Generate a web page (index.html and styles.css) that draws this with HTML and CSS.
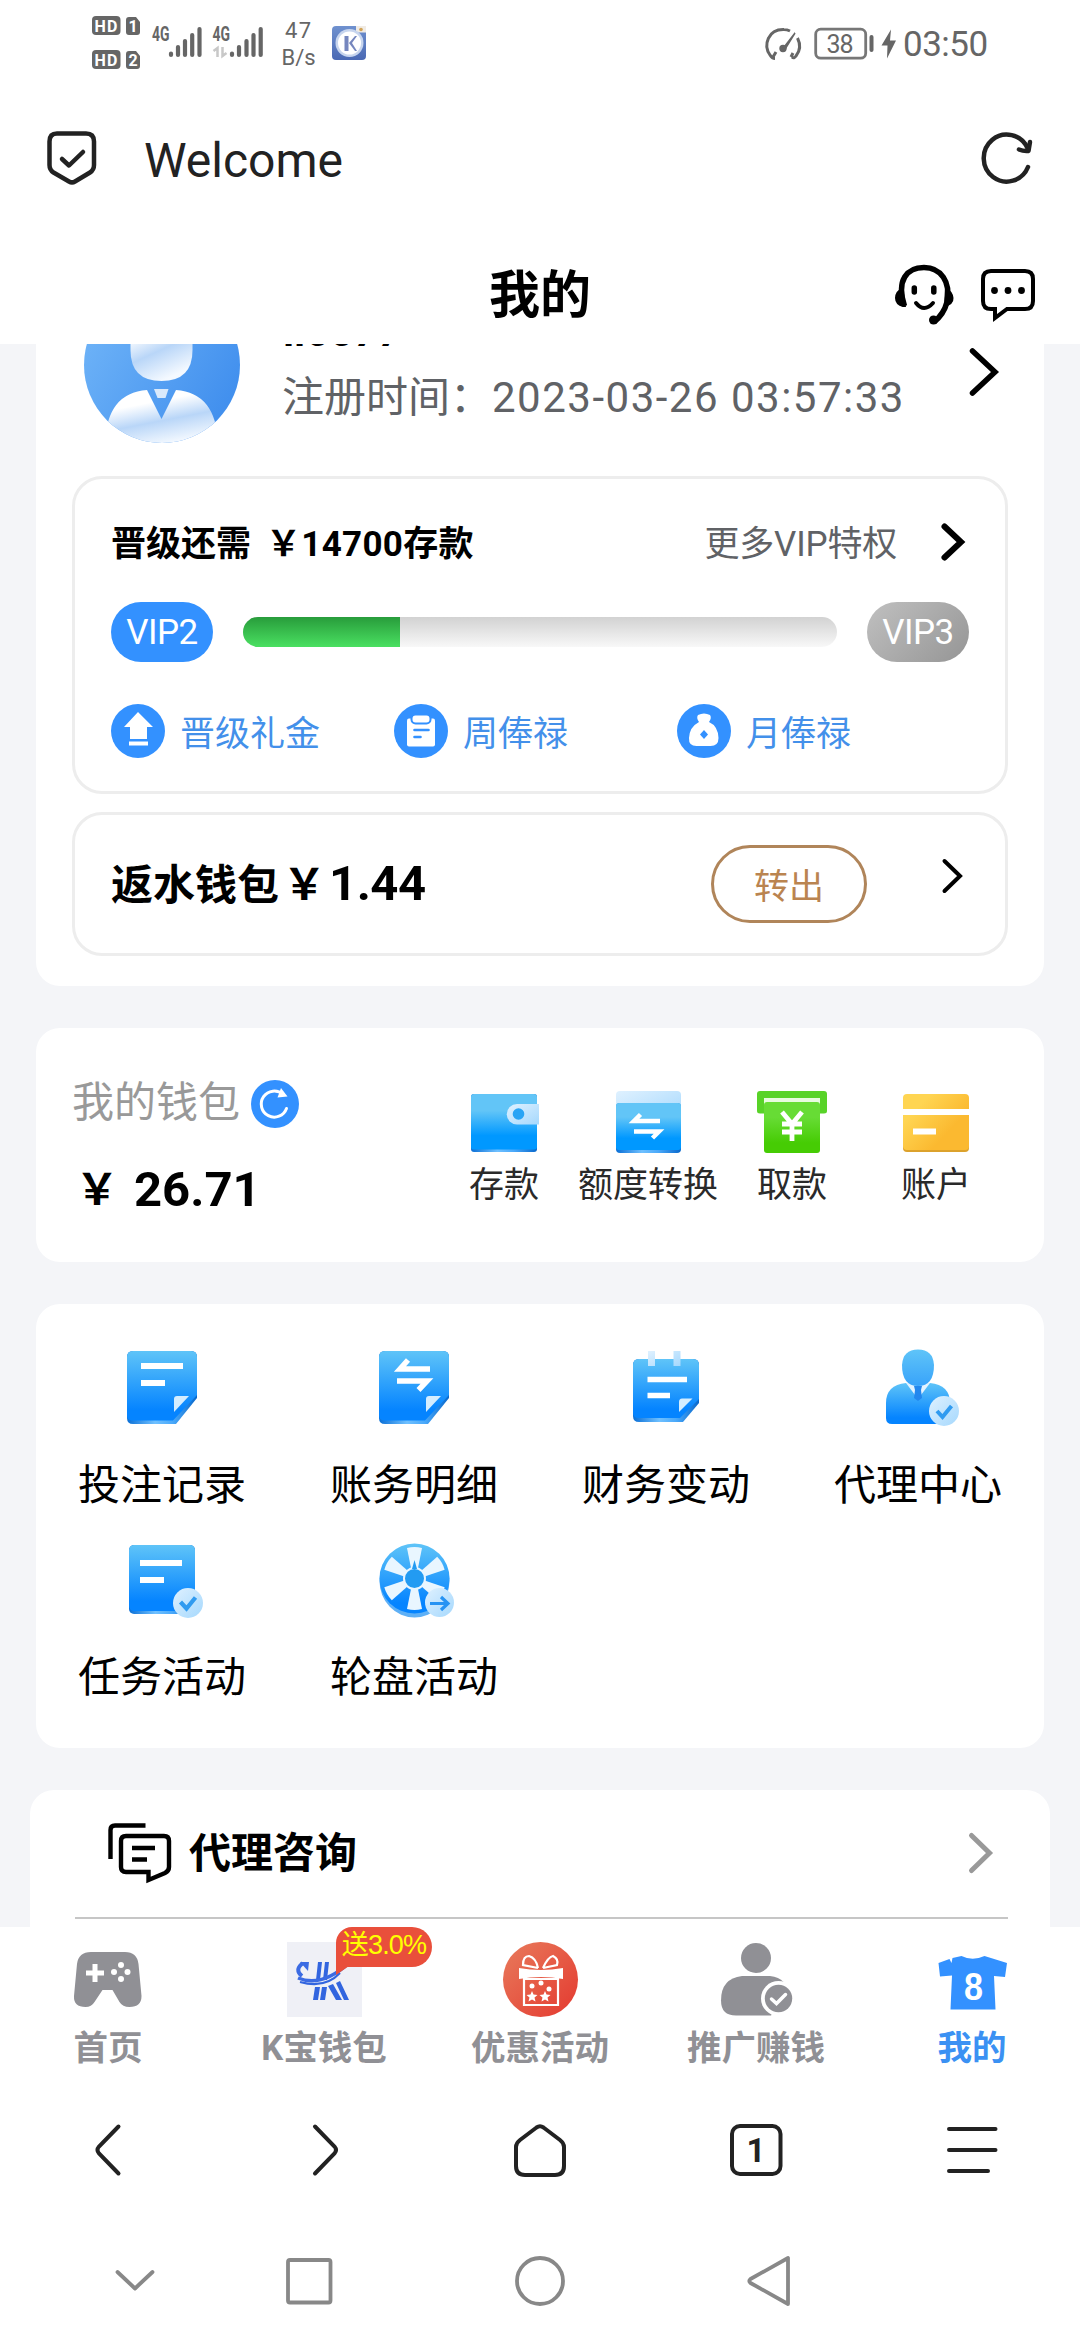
FILE: index.html
```html
<!DOCTYPE html>
<html lang="zh-CN">
<head>
<meta charset="utf-8">
<title>我的</title>
<link rel="stylesheet" href="styles.css">
</head>
<body>
<svg class="defs" width="0" height="0" aria-hidden="true">
  <defs>
    <linearGradient id="blue" x1="0" y1="0" x2="0" y2="1"><stop offset="0" stop-color="#5fc4f8"/><stop offset=".85" stop-color="#0584ff"/><stop offset="1" stop-color="#0584ff"/></linearGradient>
    <linearGradient id="head" x1="0" y1="0" x2="0" y2="1"><stop offset="0" stop-color="#5fc4f8"/><stop offset="1" stop-color="#38a3fa"/></linearGradient>
    <linearGradient id="wallet" x1="0" y1="0" x2="0" y2="1"><stop offset=".3" stop-color="#62c5f7"/><stop offset=".75" stop-color="#0098ff"/></linearGradient>
    <linearGradient id="edge"><stop offset="0" stop-color="#0a6fd6"/><stop offset=".4" stop-color="#6fc0ff"/><stop offset=".65" stop-color="#4aa9fa"/><stop offset="1" stop-color="#0868cc"/></linearGradient>
    <linearGradient id="pale" x1="0" y1="0" x2="1" y2="1"><stop offset="0" stop-color="#dff1ff"/><stop offset="1" stop-color="#a5d8fd"/></linearGradient>
    <linearGradient id="green" x1="0" y1="0" x2="0" y2="1"><stop offset=".3" stop-color="#67dc35"/><stop offset=".8" stop-color="#46cc04"/></linearGradient>
    <linearGradient id="gold" x1="0" y1="0" x2="1" y2=".8"><stop offset=".25" stop-color="#ffd552"/><stop offset=".75" stop-color="#fbb930"/></linearGradient>
    <linearGradient id="sky" x1="0" y1="0" x2="1" y2=".6"><stop offset="0" stop-color="#74b8f9"/><stop offset="1" stop-color="#4290ee"/></linearGradient>
    <linearGradient id="silver" x1=".1" y1="0" x2=".5" y2="1"><stop offset=".3" stop-color="#fff"/><stop offset=".62" stop-color="#b9d6f8"/><stop offset="1" stop-color="#f4f9ff"/></linearGradient>
    <linearGradient id="red" x1="0" y1="0" x2="1" y2="1"><stop offset="0" stop-color="#e87b5c"/><stop offset="1" stop-color="#e4392f"/></linearGradient>
    <linearGradient id="app" x1="0" y1="0" x2="0" y2="1"><stop offset="0" stop-color="#6f91cf"/><stop offset="1" stop-color="#4a69b4"/></linearGradient>
  </defs>
</svg>
<div class="phone">
  <header class="status">
    <svg class="status-left" width="284" height="70" viewBox="88 8 284 70">
      <g fill="#666"><rect x="92" y="16" width="28.500" height="19" rx="4"/><rect x="92" y="50" width="28.500" height="19" rx="4"/>
      <path d="M129 17h7l4 5v10q0 3-3 3h-8q-3 0-3-3V20q0-3 3-3zM129 51h7l4 5v10q0 3-3 3h-8q-3 0-3-3V54q0-3 3-3z"/></g>
      <g class="hd" fill="#fff"><text x="94.500" y="31.500" textLength="23">HD</text><text x="94.500" y="65.500" textLength="23">HD</text><text x="128.500" y="31.500">1</text><text x="128.500" y="65.500">2</text></g>
      <g class="net" fill="#666"><text x="152" y="41" textLength="17.500" lengthAdjust="spacingAndGlyphs">4G</text><text x="212.500" y="41" textLength="17.500" lengthAdjust="spacingAndGlyphs">4G</text></g>
      <path d="M171 53.500v1.500M178 47v8M185 41v14M192.200 35v20M199.500 29v26M232 53.500v1.500M239 47v8M246.500 41v14M253.500 35v20M260.700 29v26" stroke="#666" stroke-width="4.200" stroke-linecap="round"/>
      <path d="M217.500 57V48l-4 3M222.500 47v9l4-3" stroke="#c8c8c8" stroke-width="2.500" fill="none"/>
      <g class="speed" fill="#666"><text x="285" y="38" textLength="26">47</text><text x="281.500" y="65" textLength="34">B/s</text></g>
      <rect x="332" y="26" width="34" height="34" rx="4" fill="url(#app)"/>
      <rect x="356" y="26" width="10" height="6.500" fill="#f0ebe4"/><circle cx="361" cy="29.500" r="1.800" fill="#d2a458"/>
      <circle cx="349.500" cy="43" r="14" fill="#c7d5ee"/><circle cx="349.500" cy="43" r="11.500" fill="#fff"/>
      <path d="M344.500 36h4v15h-4zM349 43l6-7h2l-5 7 5 8h-2z" fill="#7586be"/>
    </svg>
    <div class="status-right">
      <svg width="38" height="36" viewBox="764 25 38 36" fill="none" stroke="#666" stroke-width="3">
        <path d="M775 57.500q-3 0-5-3.500C763 44 768 28 784 28.500q3 0 6 1.500M797.500 37c3.500 7 2.500 13-1.500 18q-2 3-4 1M791 56l2-4M776 51l-3 5"/>
        <circle cx="783" cy="47.500" r="2.200" fill="#666"/><path d="M783 47.500L795 32l-10.500 17z" fill="#666" stroke-width="1.500"/>
      </svg>
      <svg class="battery" width="60" height="34" viewBox="813.500 27 60 34"><rect x="815.200" y="29.200" width="50" height="29" rx="5" fill="none" stroke="#777" stroke-width="2.800"/><path d="M871 37v13" stroke="#666" stroke-width="4" stroke-linecap="round"/><text x="826" y="52.500" textLength="27" class="pct" fill="#666">38</text></svg>
      <svg class="bolt" width="15" height="30" viewBox="881 29 15 30"><path d="M891 29.500L881.500 45.500H887.500L887 58.500L896 40.500H890z" fill="#666"/></svg>
      <span class="clock">03:50</span>
    </div>
  </header>

  <div class="browser-top">
    <svg width="50" height="56" viewBox="46 130 50 56" fill="none" stroke="#222" stroke-width="4.500" stroke-linecap="round" stroke-linejoin="round"><path d="M57 133.500H86q8 0 8 8V165q0 5-4 7.500L75 181.500q-3 1.800-6 0L53.500 172.500q-4-2.500-4-7.500V141.500q0-8 7.500-8z"/><path d="M62 159l7 6.500L83 152"/></svg>
    <span class="site">Welcome</span>
    <svg width="54" height="56" viewBox="979 129 54 56" fill="none" stroke="#222" stroke-width="4.500" stroke-linecap="round" stroke-linejoin="round"><path d="M1027 166A23 23.500 0 1 1 1026.500 147"/><path d="M1029 141l-1.500 9q-5 .500-9.500-1.500"/></svg>
  </div>

  <div class="titlebar">
    <h1>我的</h1>
    <div class="title-actions">
      <svg width="62" height="62" viewBox="893 264 62 62"><path d="M904.500 306C896 280 907 267.500 924 267.500S951 282 947 302Q944 314 934 322" fill="none" stroke="#000" stroke-width="5.500"/><path d="M903 287q-8 4-8 11t8 9h3zM945 287q8 4 8.500 11t-9.500 9z"/><circle cx="933.500" cy="320" r="4.500"/><path d="M914.300 288v4M933.800 288v4" stroke="#000" stroke-width="5.500" stroke-linecap="round"/><path d="M916 303q8 10 17 0" fill="none" stroke="#000" stroke-width="4" stroke-linecap="round"/></svg>
      <svg width="54" height="56" viewBox="981 266 54 56"><path d="M991 270H1025q8 0 8 8V300q0 8-8 8H1007L995 317V308H991q-8 0-8-8V278q0-8 8-8z" fill="none" stroke="#000" stroke-width="4"/><circle cx="994.500" cy="289.500" r="3.400"/><circle cx="1008" cy="289.500" r="3.400"/><circle cx="1021.500" cy="289.500" r="3.400"/></svg>
    </div>
  </div>

  <main class="scroll">
    <section class="card profile-card">
      <div class="profile">
        <svg class="avatar" width="156" height="156" viewBox="84 287 156 156"><defs><clipPath id="face"><circle cx="162" cy="365" r="78"/></clipPath></defs><g clip-path="url(#face)"><rect x="84" y="287" width="156" height="156" fill="url(#sky)"/><path d="M130.500 335q0-25 31-25t31 25V350q0 31-31 31t-31-31z" fill="url(#silver)"/><path d="M105 445Q106 393 147 390L161.500 419L176 390Q217 393 218 445z" fill="url(#silver)"/><path d="M154 389h14.500l-3 9h-8z" fill="#d9e9fb"/></g></svg>
        <div class="who"><div class="name">ll6677</div><div class="reg">注册时间：<span class="stamp">2023-03-26 03:57:33</span></div></div>
        <svg class="profile-go" width="34" height="52" viewBox="967 346 34 52" fill="none" stroke="#000" stroke-width="5.500" stroke-linecap="round"><path d="M972.500 351L995 372L972.500 393"/></svg>
      </div>

      <div class="panel vip">
        <div class="vip-head"><strong>晋级还需<span class="need">￥14700存款</span></strong><span class="more">更多VIP特权</span>
          <svg width="30" height="44" viewBox="937 520 30 44" fill="none" stroke="#000" stroke-width="6" stroke-linecap="round"><path d="M944.500 526.500L961 542L944.500 557.500"/></svg></div>
        <div class="vip-level"><span class="pill">VIP2</span><div class="track"><div class="fill"></div></div><span class="pill next">VIP3</span></div>
        <div class="rewards">
          <div class="reward"><svg width="54" height="54" viewBox="111 704 54 54"><circle cx="138" cy="731" r="27" fill="#3391ff"/><path d="M138 712l15 15h-6v12h-17v-12h-6z M129 741.500h19v4h-19z" fill="#fff"/></svg><span>晋级礼金</span></div>
          <div class="reward"><svg width="54" height="54" viewBox="394 704 54 54"><circle cx="421" cy="731" r="27" fill="#3391ff"/><rect x="407" y="718.500" width="28" height="28" rx="2" fill="#fff"/><rect x="411.500" y="714.500" width="19" height="9" rx="4" fill="#fff" stroke="#3391ff" stroke-width="2"/><path d="M414.500 730h14M414.500 737h6" stroke="#3391ff" stroke-width="2.600" stroke-linecap="round"/></svg><span>周俸禄</span></div>
          <div class="reward"><svg width="54" height="54" viewBox="677 704 54 54"><circle cx="704" cy="731" r="27" fill="#3391ff"/><path d="M698 715q6-3 12 0 2 3-1 7 9 4 9.500 16 0 8-8 8h-14q-8 0-7.500-8 .500-11 10-16-3-4-1-7z" fill="#fff"/><path d="M704 730l4 4.500-4 4.500-4-4.500z" fill="#3391ff"/></svg><span>月俸禄</span></div>
        </div>
      </div>

      <div class="panel rebate"><strong>返水钱包<span class="money"><span class="yen">￥</span>1.44</span></strong><button>转出</button>
        <svg width="28" height="40" viewBox="938 855.500 28 40" fill="none" stroke="#000" stroke-width="4" stroke-linecap="round"><path d="M944.500 860.500L960 875.500L944.500 890.500"/></svg></div>
    </section>

    <section class="card wallet">
      <div class="balance">
        <div class="balance-title"><span>我的钱包</span><svg width="48" height="48" viewBox="251 1080 48 48"><circle cx="275" cy="1104" r="24" fill="#3391ff"/><path d="M286.500 1108.500A13 13 0 1 1 283 1094.500" fill="none" stroke="#fff" stroke-width="3" stroke-linecap="round"/><path d="M281 1088l6.500 8.500-10 1z" fill="#fff"/></svg></div>
        <div class="amount"><span class="yen">￥</span><span class="sum">26.71</span></div>
      </div>
      <nav class="wallet-nav">
        <a><svg width="72" height="64" viewBox="468 1091 72 64"><rect x="471" y="1094" width="66" height="58" rx="3" fill="url(#edge)"/><path d="M474 1094h60q3 0 3 3v50q0 2.500-3 2.500h-60q-3 0-3-2.500v-50q0-3 3-3z" fill="url(#wallet)"/><path d="M539 1104v20.500H517a10.250 10.250 0 0 1 0-20.500z" fill="url(#pale)"/><circle cx="518.500" cy="1114" r="5.800" fill="#29a4f5"/></svg>存款</a>
        <a><svg width="72" height="64" viewBox="612 1091 72 64"><rect x="616" y="1091" width="65" height="30" rx="4" fill="url(#pale)"/><rect x="616" y="1103" width="65" height="50" rx="4" fill="url(#edge)"/><path d="M619 1103h59q3 0 3 3v41q0 3-3 3h-59q-3 0-3-3v-41q0-3 3-3z" fill="url(#wallet)"/><path d="M660 1121H634l6.500-6.500M634 1131.500h25l-6.500 6.500" fill="none" stroke="#fff" stroke-width="4.500"/></svg>额度转换</a>
        <a><svg width="72" height="64" viewBox="756 1091 72 64"><path d="M760 1091h64q3 0 3 3v17q0 2.500-3 2.500h-64q-3 0-3-2.500v-17q0-3 3-3z" fill="#58d328"/><path d="M764 1098h56v12h-56z" fill="#e8fbe0"/><path d="M764 1105q0-3 3-3h50q3 0 3 3v45q0 3-3 3h-50q-3 0-3-3z" fill="url(#green)"/><path d="M782 1112l10 12 10-12M792 1123v18M782 1124h20M782 1132h20" fill="none" stroke="#fff" stroke-width="4.800"/></svg>取款</a>
        <a><svg width="72" height="64" viewBox="900 1091 72 64"><rect x="903" y="1096" width="66" height="56" rx="4" fill="#dca22c"/><rect x="903" y="1094" width="66" height="56" rx="4" fill="url(#gold)"/><path d="M903 1109h66v6h-66zM913 1128.500h23v6h-23z" fill="#fff"/></svg>账户</a>
      </nav>
    </section>

    <section class="card services">
      <a><svg width="80" height="80" viewBox="122 1346 80 80"><path d="M133 1351h58q6 0 6 6v41l-21 26h-43q-6 0-6-6v-61q0-6 6-6z" fill="url(#edge)"/><path d="M133 1351h58q6 0 6 6v38l-24 25.500h-40q-6 0-6-5v-58.500q0-6 6-6z" fill="url(#blue)"/><path d="M141 1366h42M141 1383h24" stroke="#fff" stroke-width="6"/><path d="M174 1412v-13q0-3 3-3h12z" fill="#d4edff"/></svg>投注记录</a>
      <a><svg width="80" height="80" viewBox="374 1346 80 80"><path d="M385 1351h58q6 0 6 6v41l-21 26h-43q-6 0-6-6v-61q0-6 6-6z" fill="url(#edge)"/><path d="M385 1351h58q6 0 6 6v38l-24 25.500h-40q-6 0-6-5v-58.500q0-6 6-6z" fill="url(#blue)"/><path d="M430 1369h-30l8-9M397 1381h30l-8.500 9" fill="none" stroke="#fff" stroke-width="5.500"/><path d="M426 1412v-13q0-3 3-3h12z" fill="#d4edff"/></svg>账务明细</a>
      <a><svg width="80" height="80" viewBox="626 1346 80 80"><path d="M639 1359h54q6 0 6 6v38l-16 19h-44q-6 0-6-6v-51q0-6 6-6z" fill="url(#edge)"/><path d="M639 1359h54q6 0 6 6v34l-19 19h-41q-6 0-6-5v-48q0-6 6-6z" fill="url(#blue)"/><path d="M648 1351h7v15h-7zM673.500 1351h7v15h-7z" fill="url(#pale)"/><path d="M647.500 1379.500h39.500M647.500 1395.500h22.500" stroke="#fff" stroke-width="5.500"/><path d="M679 1412v-10q0-3.500 3-3.500h10.500z" fill="#d4edff"/></svg>财务变动</a>
      <a><svg width="80" height="80" viewBox="878 1346 80 80"><path d="M886 1403q0-18 20-20h24q20 2 20 20v21h-58q-6 0-6-6z" fill="url(#blue)"/><path d="M906 1383l12 16 12-16z" fill="#e4f3ff"/><path d="M914 1386h8l-1 4 1 8-4 3-4-3 1-8z" fill="#2387ee"/><path d="M902 1365q1-15.500 16-15.500t16 15.500q0 21-16 21t-16-21z" fill="url(#head)"/><circle cx="944" cy="1411" r="15" fill="url(#pale)"/><path d="M937 1411l5.500 6 9-11" fill="none" stroke="#309bf0" stroke-width="4"/></svg>代理中心</a>
      <a><svg width="80" height="80" viewBox="122 1538 80 80"><rect x="129" y="1545" width="66" height="69" rx="5" fill="url(#edge)"/><rect x="129" y="1545" width="66" height="66" rx="5" fill="url(#blue)"/><path d="M140 1563h42M140 1580h24" stroke="#fff" stroke-width="6"/><circle cx="188" cy="1603" r="15" fill="url(#pale)"/><path d="M180.500 1602l6 6.500 9-11" fill="none" stroke="#309bf0" stroke-width="4.200"/></svg>任务活动</a>
      <a><svg width="80" height="80" viewBox="374 1538 80 80"><ellipse cx="414.500" cy="1581" rx="35" ry="36.500" fill="#5eb0f6"/><circle cx="414.500" cy="1578.500" r="35" fill="url(#blue)"/><g fill="#e9f6ff"><path id="blade" d="M407 1548q7.500-2 15 0l-4 20h-7z"/><use href="#blade" transform="rotate(60 414.500 1578.500)"/><use href="#blade" transform="rotate(120 414.500 1578.500)"/><use href="#blade" transform="rotate(180 414.500 1578.500)"/><use href="#blade" transform="rotate(240 414.500 1578.500)"/><use href="#blade" transform="rotate(300 414.500 1578.500)"/></g><circle cx="414.500" cy="1578.500" r="10.500" fill="#239bf2" stroke="#e9f6ff" stroke-width="2"/><path d="M412 1569l2.500-9 2.500 9z" fill="#239bf2"/><circle cx="439.500" cy="1602.500" r="14.500" fill="url(#pale)"/><path d="M430 1603.500h17M441 1597l7 6.500-7 6.500" fill="none" stroke="#2693f3" stroke-width="3.200"/></svg>轮盘活动</a>
    </section>

    <section class="consult">
      <div class="consult-row"><svg width="66" height="66" viewBox="107 1819 66 66" fill="none" stroke="#000" stroke-width="4.400"><path d="M145.500 1824.500H115q-4.500 0-4.500 4.500V1858"/><path d="M126 1835H164q5 0 5 5V1866q0 4-4 6L148.500 1879V1871H126q-5 0-5-5V1840q0-5 5-5zM132 1847h23M132 1858.500h15"/></svg><strong>代理咨询</strong>
      <svg class="consult-go" width="32" height="48" viewBox="964 1829 32 48" fill="none" stroke="#999" stroke-width="5" stroke-linecap="round"><path d="M971.500 1835.500L989.500 1853L971.500 1870.500"/></svg></div>
    </section>
  </main>

  <nav class="tabs">
    <a><svg width="76" height="76" viewBox="71 1942 76 76"><path d="M92 1952h34q12 0 13.500 12l3 32q0 11-12 11-7 0-10-5l-7-12h-10l-8 12q-3 5-9 5-12 0-11.500-11l3-32q1.500-12 14-12z" fill="#909095"/><path d="M96 1964v18M87 1973h18" stroke="#fff" stroke-width="5"/><g fill="#fff"><circle cx="122" cy="1965" r="3"/><circle cx="122" cy="1979" r="3"/><circle cx="115" cy="1972" r="3"/><circle cx="128.500" cy="1972" r="3"/></g></svg>首页</a>
    <a class="kwallet"><svg width="76" height="76" viewBox="286 1942 76 76"><path d="M287 1942h75v75h-75z" fill="#eff0f6"/><path d="M318 1962h4l-2 18h-4zM325 1962h4l-2 18h-4zM315 1987h5l-2 13h-5zM322 1987h5l-2 13h-5zM328 1986l5-2 9 16h-6zM336 1983l4-2 9 19h-5z" fill="#3265df"/><path d="M302 1976q-8-6 1-13" fill="none" stroke="#3b6be3" stroke-width="4"/><path d="M298 1978q24 10 52-16" fill="none" stroke="#3b6be3" stroke-width="3.500"/><path d="M300 1962h9l-1 9z" fill="#3b6be3"/><path d="M300 1982q25 7 40-9" fill="none" stroke="#3265df" stroke-width="2"/></svg><span class="badge">送3.0%</span>K宝钱包</a>
    <a><svg width="76" height="76" viewBox="502 1942 76 76"><circle cx="540.500" cy="1979.500" r="37.500" fill="url(#red)"/><g fill="none" stroke="#fff" stroke-width="2.200"><path d="M524 1979h34v26h-34zM538 1968l-15-3q0-9 6-9 7 2 9 12M543 1968l14-3q2-6-4-9-5 1-10 12"/></g><path d="M519 1968q22 4 44 0v11q-22-4-44 0z" fill="#fff"/><g fill="#fff"><path id="star" d="M532 1991l1.500 3.500 4 .500-3 2.500 1 4-3.500-2-3.500 2 1-4-3-2.500 4-.500z"/><use href="#star" x="13" y="0"/><circle cx="532" cy="1986" r="2.500"/><circle cx="549" cy="1989" r="2.500"/><circle cx="541" cy="1983" r="2.500"/></g></svg>优惠活动</a>
    <a><svg width="76" height="76" viewBox="718 1942 76 76"><circle cx="756" cy="1958" r="15" fill="#909095"/><path d="M742 1976h28q18 2 18 20v12q0 7.500-7 7.500H736q-15 0-15-15 0-22 21-24.500z" fill="#909095"/><path d="M771 2016V2019h24V1980h-10z" fill="#fff"/><circle cx="778.500" cy="1998.500" r="17.500" fill="#fff"/><circle cx="778.500" cy="1998.500" r="13.700" fill="#909095"/><path d="M771.500 1999l5 4.500 9-9" fill="none" stroke="#fff" stroke-width="3.500" stroke-linecap="round"/></svg>推广赚钱</a>
    <a class="active"><svg width="76" height="76" viewBox="934 1942 76 76"><path d="M938.500 1963l11-4 2 4 1-5 9-2q11 5.500 23 0l22.500 7-2 14-11-1 1.500 33.500h-45l1.500-34-12 1z" fill="#3391ff"/><text x="964" y="2000" class="shirt-no" textLength="19" lengthAdjust="spacingAndGlyphs" fill="#fff">8</text></svg>我的</a>
  </nav>

  <nav class="browser-nav">
    <span><svg width="60" height="60" viewBox="78 2120 60 60"><path d="M118.500 2126.500L99 2146.500q-3 3.500 0 7L118.500 2173.500"/></svg></span>
    <span><svg width="60" height="60" viewBox="294 2120 60 60"><path d="M315 2126.500L334.500 2146.500q3 3.500 0 7L315 2173.500"/></svg></span>
    <span><svg width="60" height="60" viewBox="510 2120 60 60"><path d="M536.500 2127.500q3.500-2.500 7 0L560 2140q4 3 4 7V2166q0 9-9 9H525q-9 0-9-9V2147q0-4 4-7z"/></svg></span>
    <span><svg width="60" height="60" viewBox="726 2120 60 60"><rect x="732" y="2126" width="48.500" height="48" rx="8"/><text x="756" y="2161.500" text-anchor="middle" class="tab-count">1</text></svg></span>
    <span><svg width="60" height="60" viewBox="942 2120 60 60"><path d="M949 2129h46.500M949 2150h46.500M949 2171h39"/></svg></span>
  </nav>

  <nav class="system-nav">
    <svg width="60" height="60" viewBox="105 2251 60 60"><path d="M117.500 2272L135 2288.500L152.500 2272"/></svg>
    <svg width="60" height="60" viewBox="279 2251 60 60"><rect x="288" y="2260" width="42.500" height="42.500" rx="2"/></svg>
    <svg width="60" height="60" viewBox="510 2251 60 60"><circle cx="540" cy="2281" r="23"/></svg>
    <svg width="60" height="60" viewBox="740 2251 60 60"><path d="M788 2258V2304L750.500 2283q-2.500-2 0-4z"/></svg>
  </nav>
</div>
</body>
</html>
```
FILE: styles.css
```css
* { box-sizing: border-box; }
body { margin: 0; background: #fff; color: #000; font-family: Roboto, "Noto Sans CJK SC", sans-serif; }
svg { display: block; flex: none; overflow: visible; }
.defs { position: absolute; }
.phone { width: 1080px; height: 2340px; display: flex; flex-direction: column; overflow: hidden; }

/* Status bar */
.status { height: 86px; display: flex; justify-content: space-between; align-items: center; padding: 0 91px 0 88px; color: #666; }
.status-right { display: flex; align-items: center; padding-top: 1px; }
.battery { margin-left: 12px; }
.bolt { margin-left: 7px; }
.clock { margin-left: 7px; padding-top: 2px; font-size: 35px; line-height: 40px; letter-spacing: -0.5px; width: 86px; }
.hd { font: bold 16px Roboto, sans-serif; }
.net { font: bold 21px Roboto, sans-serif; }
.speed { font: 22px Roboto, sans-serif; }
.pct { font: 25px Roboto, sans-serif; }

/* Browser address bar */
.browser-top { height: 144px; display: flex; align-items: center; padding: 0 46px; }
.site { margin: 5px auto 0 48px; font-size: 48px; line-height: 60px; letter-spacing: 0; color: #222; }

/* Page title */
.titlebar { height: 114px; display: grid; grid-template-columns: 1fr auto 1fr; align-items: center; padding: 15px 45px 0; }
.titlebar h1 { grid-column: 2; margin: 0; padding-top: 3px; font-size: 51px; line-height: 60px; font-weight: 700; }
.title-actions { justify-self: end; display: flex; align-items: center; gap: 26px; }

/* Scroll area */
.scroll { height: 1583px; background: #f4f5f8; overflow: hidden; padding: 0 36px; display: flex; flex-direction: column; gap: 42px; flex: none; }
.card { background: #fff; border-radius: 24px; flex: none; }
.profile-card { height: 642px; border-top-left-radius: 0; border-top-right-radius: 0; padding: 0 36px; display: flex; flex-direction: column; }
.profile { height: 156px; margin: -57px 0 33px; display: flex; padding: 0 7px 0 12px; flex: none; }
.who { margin-left: 42px; flex: 1; white-space: nowrap; }
.name { font-size: 42px; font-weight: 700; line-height: 42px; margin-top: 24px; padding-left: 1px; }
.reg { font-size: 42px; line-height: 50px; margin-top: 20px; color: #606266; }
.stamp { letter-spacing: 1.5px; }
.profile-go { margin-top: 59px; }

.panel { border: 3px solid #ededed; border-radius: 30px; padding: 0 36px; flex: none; }
.vip { height: 318px; margin-bottom: 18px; }
.vip-head { display: flex; align-items: center; font-size: 35px; line-height: 44px; margin-top: 41px; height: 44px; white-space: nowrap; }
.vip-head strong, .more { padding-top: 5px; }
.vip-head .need { margin-left: 15px; letter-spacing: 0.3px; }
.vip-head svg { margin-right: 2px; }
.more { margin-left: auto; margin-right: 40px; letter-spacing: -0.2px; color: #606266; }
.vip-level { display: flex; align-items: center; height: 60px; margin-top: 38px; }
.pill { width: 102px; height: 60px; border-radius: 30px; background: #3391ff; color: #fff; font-size: 35px; line-height: 61px; text-align: center; letter-spacing: -0.5px; }
.pill.next { background: linear-gradient(135deg, #c0c0c0, #959595); }
.track { flex: 1; height: 30px; margin: 0 30px; border-radius: 15px; overflow: hidden; background: linear-gradient(#d2d2d2, #f8f8f8); }
.fill { width: 26.5%; height: 100%; background: linear-gradient(#289c3b, #4ae061); }
.rewards { display: grid; grid-template-columns: repeat(3, 283px); margin-top: 42px; }
.reward { display: flex; align-items: center; gap: 15px; height: 54px; font-size: 35px; line-height: 50px; color: #4390ea; }
.reward span { padding-top: 7px; }

.rebate { height: 144px; display: flex; align-items: center; padding-right: 39px; }
.rebate strong { font-size: 42px; line-height: 60px; padding-top: 2px; flex: 1; white-space: nowrap; }
.rebate .money { font-size: 49px; letter-spacing: -0.5px; }
.yen { display: inline-block; width: 50px; text-align: center; font-size: 43px; }
.rebate button { width: 156px; height: 78px; margin-right: 71px; padding: 0; border: 3px solid #b0855a; border-radius: 39px; background: #fff; color: #ba8450; font: 35px/68px "Noto Sans CJK SC", sans-serif; }
.rebate svg { margin-bottom: 17px; }

/* Wallet */
.wallet { height: 234px; display: flex; padding: 0 36px; justify-content: space-between; }
.balance-title { display: flex; align-items: center; gap: 11px; margin-top: 52px; font-size: 42px; line-height: 44px; height: 48px; color: #999; }
.balance-title span { padding-bottom: 3px; }
.amount { display: flex; margin-top: 32px; font-size: 49px; line-height: 60px; font-weight: 700; }
.amount .sum { margin-left: 12px; }
.wallet-nav { display: grid; grid-template-columns: repeat(4, 144px); }
.wallet-nav a { display: flex; flex-direction: column; align-items: center; padding-top: 63px; font-size: 35px; line-height: 44px; color: #2a2a2a; white-space: nowrap; gap: 9px; }

/* Services */
.services { height: 444px; display: grid; grid-template-columns: repeat(4, 252px); grid-auto-rows: 192px; padding-top: 42px; }
.services a { display: flex; flex-direction: column; align-items: center; gap: 32px; font-size: 42px; line-height: 56px; }

/* Consultation */
.consult { background: #fff; border-radius: 24px; height: 160px; margin: 0 -6px; padding: 0 42px 0 45px; flex: none; }
.consult-row { display: flex; align-items: center; height: 129px; border-bottom: 2px solid #c6c6c6; padding: 0 12px 2px 32px; font-size: 42px; }
.consult-row strong { flex: 1; margin-left: 16px; padding-top: 3px; line-height: 60px; }

/* App tabs */
.tabs { height: 153px; display: grid; grid-template-columns: repeat(5, 216px); padding-top: 15px; flex: none; }
.tabs a { position: relative; display: flex; flex-direction: column; align-items: center; gap: 8px; font-size: 34.5px; line-height: 44px; font-weight: 700; color: #909095; }
.tabs .active { color: #3b91f3; }
.badge { position: absolute; left: 120px; top: -15px; width: 96px; height: 40px; border-radius: 16px 20px 20px 0; background: #e94f3b; color: #ff0; font: 27px/36px "Liberation Sans", "Noto Sans CJK SC", sans-serif; letter-spacing: -0.8px; text-align: center; white-space: nowrap; }
.badge::after { content: ""; position: absolute; left: 0; top: 39px; border-top: 9px solid #e94f3b; border-right: 13px solid transparent; }
.shirt-no { font: bold 39px "Liberation Sans", sans-serif; }

/* Browser toolbar */
.browser-nav { height: 141px; display: grid; grid-template-columns: repeat(5, 216px); justify-items: center; align-items: center; padding-bottom: 1px; flex: none; }
.browser-nav svg { fill: none; stroke: #222; stroke-width: 4; stroke-linecap: round; }
.browser-nav .tab-count { font: bold 33px Roboto, sans-serif; fill: #222; stroke: none; }

/* System navigation */
.system-nav { height: 119px; display: flex; align-items: center; padding-left: 105px; flex: none; }
.system-nav svg { fill: none; stroke: #888; stroke-width: 3.8; stroke-linejoin: round; stroke-linecap: round; }
.system-nav svg:nth-child(2) { margin-left: 114px; }
.system-nav svg:nth-child(3) { margin-left: 171px; }
.system-nav svg:nth-child(4) { margin-left: 170px; }
```
